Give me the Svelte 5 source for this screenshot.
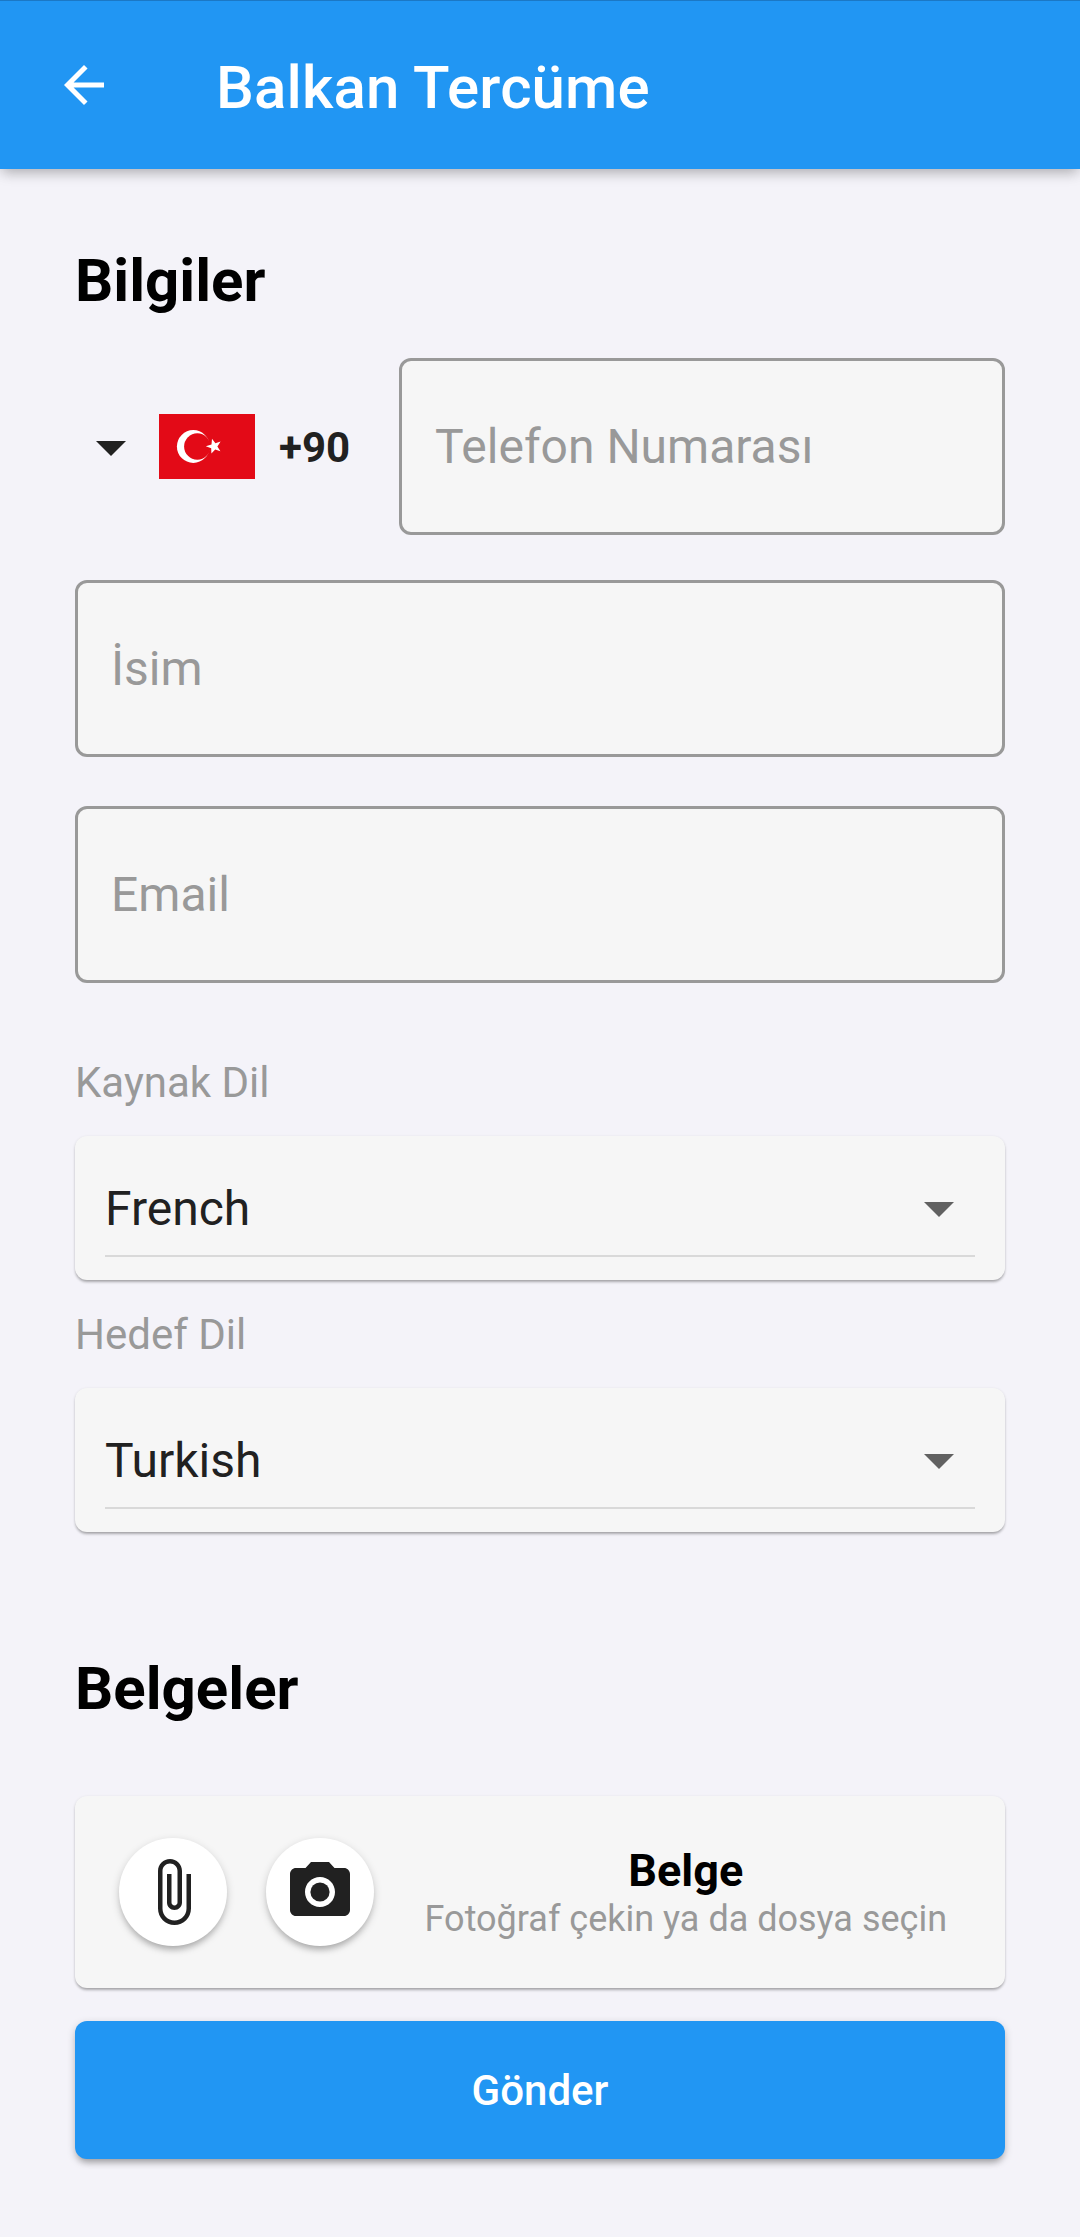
<script>
  const languages = [
    { label: 'Kaynak Dil', value: 'French' },
    { label: 'Hedef Dil', value: 'Turkish' }
  ];
</script>

{#snippet caret()}
  <svg class="caret" viewBox="0 0 24 24" aria-hidden="true"><path d="M7 10l5 5 5-5z" /></svg>
{/snippet}

<div class="screen">
  <header class="bar">
    <button class="back" aria-label="Geri">
      <svg viewBox="0 0 24 24"><path d="M20 11H7.83l5.59-5.59L12 4l-8 8 8 8 1.41-1.41L7.83 13H20v-2z" /></svg>
    </button>
    <h1>Balkan Tercüme</h1>
  </header>

  <main>
    <h2>Bilgiler</h2>

    <div class="phone">
      <div class="country">
        {@render caret()}
        <svg class="flag" viewBox="0 0 96 65" aria-hidden="true">
          <rect width="96" height="65" fill="#e30a17" />
          <circle cx="34.3" cy="32.5" r="16.4" fill="#fff" />
          <circle cx="38.3" cy="32.5" r="13.2" fill="#e30a17" />
          <path fill="#fff" d="M46.8 32.3L52.5 30.6 53 24.8 56.4 29.3 61.6 27.4 58.4 32.4 61.4 37.2 56.2 35.6 52.4 39.6 52.2 34.3z" />
        </svg>
        <span class="code">+90</span>
      </div>
      <div class="field"><span>Telefon Numarası</span></div>
    </div>
    <div class="field name"><span>İsim</span></div>
    <div class="field email"><span>Email</span></div>

    <div class="languages">
      {#each languages as language}
        <div class="language">
          <div class="label">{language.label}</div>
          <div class="card select">
            <div class="value"><span>{language.value}</span>{@render caret()}</div>
          </div>
        </div>
      {/each}
    </div>

    <h2 class="documents">Belgeler</h2>

    <div class="card upload">
      <button class="round" aria-label="Dosya ekle">
        <svg viewBox="0 0 24 24"><path d="M16.5 6v11.5c0 2.21-1.79 4-4 4s-4-1.79-4-4V5c0-1.38 1.12-2.5 2.5-2.5s2.5 1.12 2.5 2.5v10.5c0 .55-.45 1-1 1s-1-.45-1-1V6H10v9.5c0 1.38 1.12 2.5 2.5 2.5s2.5-1.12 2.5-2.5V5c0-2.21-1.79-4-4-4S7 2.79 7 5v12.5c0 3.04 2.46 5.5 5.5 5.5s5.5-2.46 5.5-5.5V6h-1.5z" /></svg>
      </button>
      <button class="round" aria-label="Fotoğraf çek">
        <svg viewBox="0 0 24 24"><circle cx="12" cy="12" r="3.2" /><path d="M9 2L7.17 4H4c-1.1 0-2 .9-2 2v12c0 1.1.9 2 2 2h16c1.1 0 2-.9 2-2V6c0-1.1-.9-2-2-2h-3.17L15 2H9zm3 15c-2.76 0-5-2.24-5-5s2.24-5 5-5 5 2.24 5 5-2.24 5-5 5z" /></svg>
      </button>
      <div class="text">
        <strong>Belge</strong>
        <small>Fotoğraf çekin ya da dosya seçin</small>
      </div>
    </div>

    <button class="send">Gönder</button>
  </main>
</div>

<style>
  :global(body) {
    background: #f4f3f9;
  }
  .screen {
    box-sizing: border-box;
    min-height: 2237px;
    background: #f4f3f9;
    font-family: Roboto, sans-serif;
    color: #212121;
  }
  button {
    border: 0;
    padding: 0;
    font: inherit;
    color: inherit;
  }
  svg {
    display: block;
    flex: none;
    fill: currentColor;
  }
  .bar {
    box-sizing: border-box;
    display: flex;
    align-items: center;
    height: 169px;
    padding: 0 0 0 54px;
    border-top: 1px solid #1b78c5;
    background: #2196f3;
    color: #fff;
    box-shadow: 0 6px 12px -3px rgba(0, 0, 0, 0.2), 0 3px 15px rgba(0, 0, 0, 0.13);
  }
  .back {
    background: none;
  }
  .back svg {
    width: 60px;
    height: 60px;
  }
  h1,
  h2 {
    margin: 0;
    font-size: 60px;
    line-height: 70px;
  }
  h1 {
    margin: 5px 0 0 102px;
    font-weight: 500;
    letter-spacing: 0.15px;
  }
  main {
    display: flex;
    flex-direction: column;
    padding: 77px 75px 0;
  }
  h2 {
    height: 70px;
    font-weight: 700;
    color: #000;
  }
  .phone {
    display: grid;
    grid-template-columns: 324px 1fr;
    margin-top: 42px;
  }
  .country {
    display: flex;
    align-items: center;
  }
  .caret {
    width: 72px;
    height: 72px;
  }
  .flag {
    width: 96px;
    height: 65px;
    margin-left: 12px;
  }
  .code {
    margin-left: 24px;
    padding-top: 2px;
    font-size: 42px;
    font-weight: 700;
    line-height: 50px;
  }
  .field {
    box-sizing: border-box;
    display: flex;
    align-items: center;
    height: 177px;
    padding-left: 33px;
    border: 3px solid #999;
    border-radius: 12px;
    background: #f6f6f6;
    color: #999;
    font-size: 48px;
  }
  .name {
    margin-top: 45px;
  }
  .email {
    margin-top: 49px;
  }
  .languages {
    display: grid;
    gap: 28px;
    margin-top: 73px;
  }
  .label {
    height: 80px;
    color: #999;
    font-size: 42px;
    line-height: 54px;
  }
  .card {
    box-sizing: border-box;
    border-radius: 12px;
    background: #f6f6f6;
    box-shadow: 0 3px 3px -1px rgba(0, 0, 0, 0.25), 0 1px 3px rgba(0, 0, 0, 0.15);
  }
  .select {
    height: 144px;
    padding: 24px 30px 23px;
  }
  .value {
    box-sizing: border-box;
    display: flex;
    align-items: center;
    justify-content: space-between;
    height: 97px;
    padding-top: 1px;
    border-bottom: 2px solid #d9d9d9;
    font-size: 48px;
  }
  .value span {
    padding-top: 1px;
  }
  .value .caret {
    color: #616161;
  }
  .documents {
    margin-top: 122px;
  }
  .upload {
    display: flex;
    align-items: center;
    height: 192px;
    margin-top: 72px;
    padding-left: 43.6px;
  }
  .round {
    display: grid;
    place-items: center;
    flex: none;
    width: 108px;
    height: 108px;
    margin-right: 39px;
    border-radius: 50%;
    background: #fff;
    box-shadow: 0 6px 6px -3px rgba(0, 0, 0, 0.2), 0 3px 9px rgba(0, 0, 0, 0.18);
  }
  .round svg {
    width: 72px;
    height: 72px;
  }
  .text {
    display: flex;
    flex-direction: column;
    align-items: center;
    margin-left: 12px;
    white-space: nowrap;
  }
  strong {
    margin-bottom: 1px;
    font-size: 45px;
    line-height: 53px;
    color: #000;
  }
  small {
    font-size: 36px;
    line-height: 42px;
    color: #999;
  }
  .send {
    height: 138px;
    margin-top: 33px;
    border-radius: 12px;
    background: #2196f3;
    color: #fff;
    font-size: 42px;
    font-weight: 500;
    box-shadow: 0 6px 6px -3px rgba(0, 0, 0, 0.22), 0 3px 9px rgba(0, 0, 0, 0.2);
  }
</style>
